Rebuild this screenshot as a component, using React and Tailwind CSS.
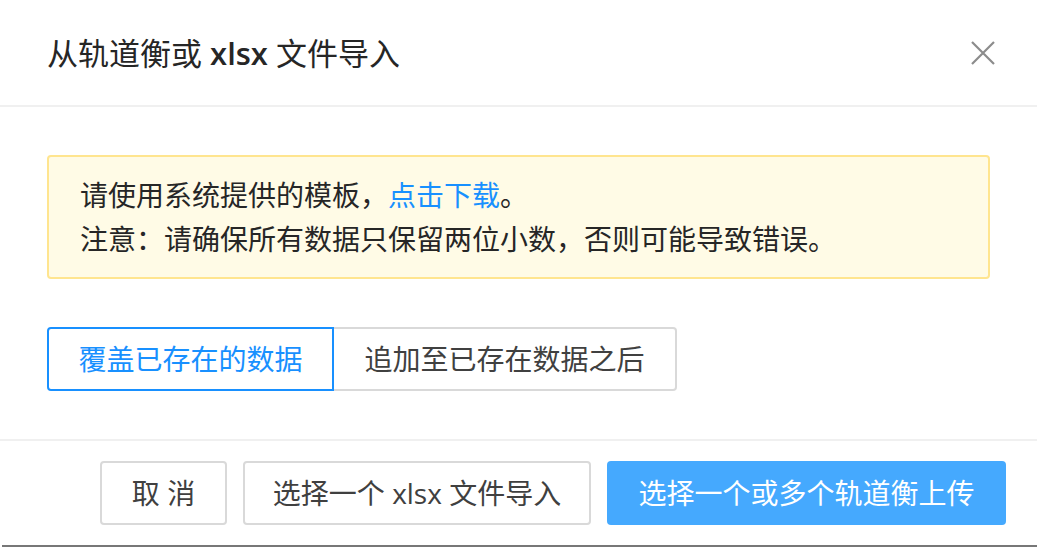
import React from "react";

/* =========================================================
   IMPORT MODAL (scaled antd-style dialog)
========================================================= */
const FONT = {
  fontFamily: "'Open Sans', 'Noto Sans CJK SC', sans-serif",
};

function CloseIcon() {
  return (
    <svg width="24" height="24" viewBox="0 0 24 24" fill="none">
      <path d="M1 1 L23 23 M23 1 L1 23" stroke="#8c8c8c" strokeWidth="2.2" />
    </svg>
  );
}

export default function App() {
  return (
    <div className="w-[1037px] h-[547px] bg-white flex flex-col overflow-hidden text-[#262626]" style={FONT}>

      {/* HEADER */}
      <div className="flex items-center justify-between pl-[47px] pr-[42px] pt-[31px] pb-[30px] border-b-2 border-[#f0f0f0]">
        <h2 className="text-[31px] leading-[44px] font-normal text-[#262626]">
          从轨道衡或 <span className="font-semibold">xlsx</span> 文件导入
        </h2>
        <button className="flex items-center justify-center w-[24px] h-[24px]">
          <CloseIcon />
        </button>
      </div>

      {/* BODY */}
      <div className="px-[47px] pt-[48px] pb-[48px]">
        <div className="rounded-[4px] border-2 border-[#ffe58f] bg-[#fffbe6] px-[31px] py-[16px] text-[28px] leading-[44px]">
          <p>
            请使用系统提供的模板，<span className="text-[#1890ff]">点击下载</span>。
          </p>
          <p>注意：请确保所有数据只保留两位小数，否则可能导致错误。</p>
        </div>

        <div className="mt-[48px] flex text-[28px] leading-[44px]">
          <div className="h-[64px] w-[287px] flex items-center justify-center border-2 border-[#1890ff] rounded-l-[4px] text-[#1890ff]">
            覆盖已存在的数据
          </div>
          <div className="h-[64px] w-[343px] flex items-center justify-center border-2 border-l-0 border-[#d9d9d9] rounded-r-[4px] text-[#404040]">
            追加至已存在数据之后
          </div>
        </div>
      </div>

      {/* FOOTER */}
      <div className="flex justify-end gap-[16px] px-[31px] pt-[20px] pb-[20px] border-t-2 border-[#f0f0f0] text-[28px] leading-[44px]">
        <button className="h-[64px] w-[127px] flex items-center justify-center border-2 border-[#d9d9d9] rounded-[4px] text-[#404040]">
          取 消
        </button>
        <button className="h-[64px] w-[348px] flex items-center justify-center border-2 border-[#d9d9d9] rounded-[4px] text-[#404040]">
          选择一个 xlsx 文件导入
        </button>
        <button className="h-[64px] w-[399px] flex items-center justify-center rounded-[4px] bg-[#45a9fe] text-white">
          选择一个或多个轨道衡上传
        </button>
      </div>

      <div className="h-[2px] bg-[#777777] ml-[2px]" />
    </div>
  );
}
